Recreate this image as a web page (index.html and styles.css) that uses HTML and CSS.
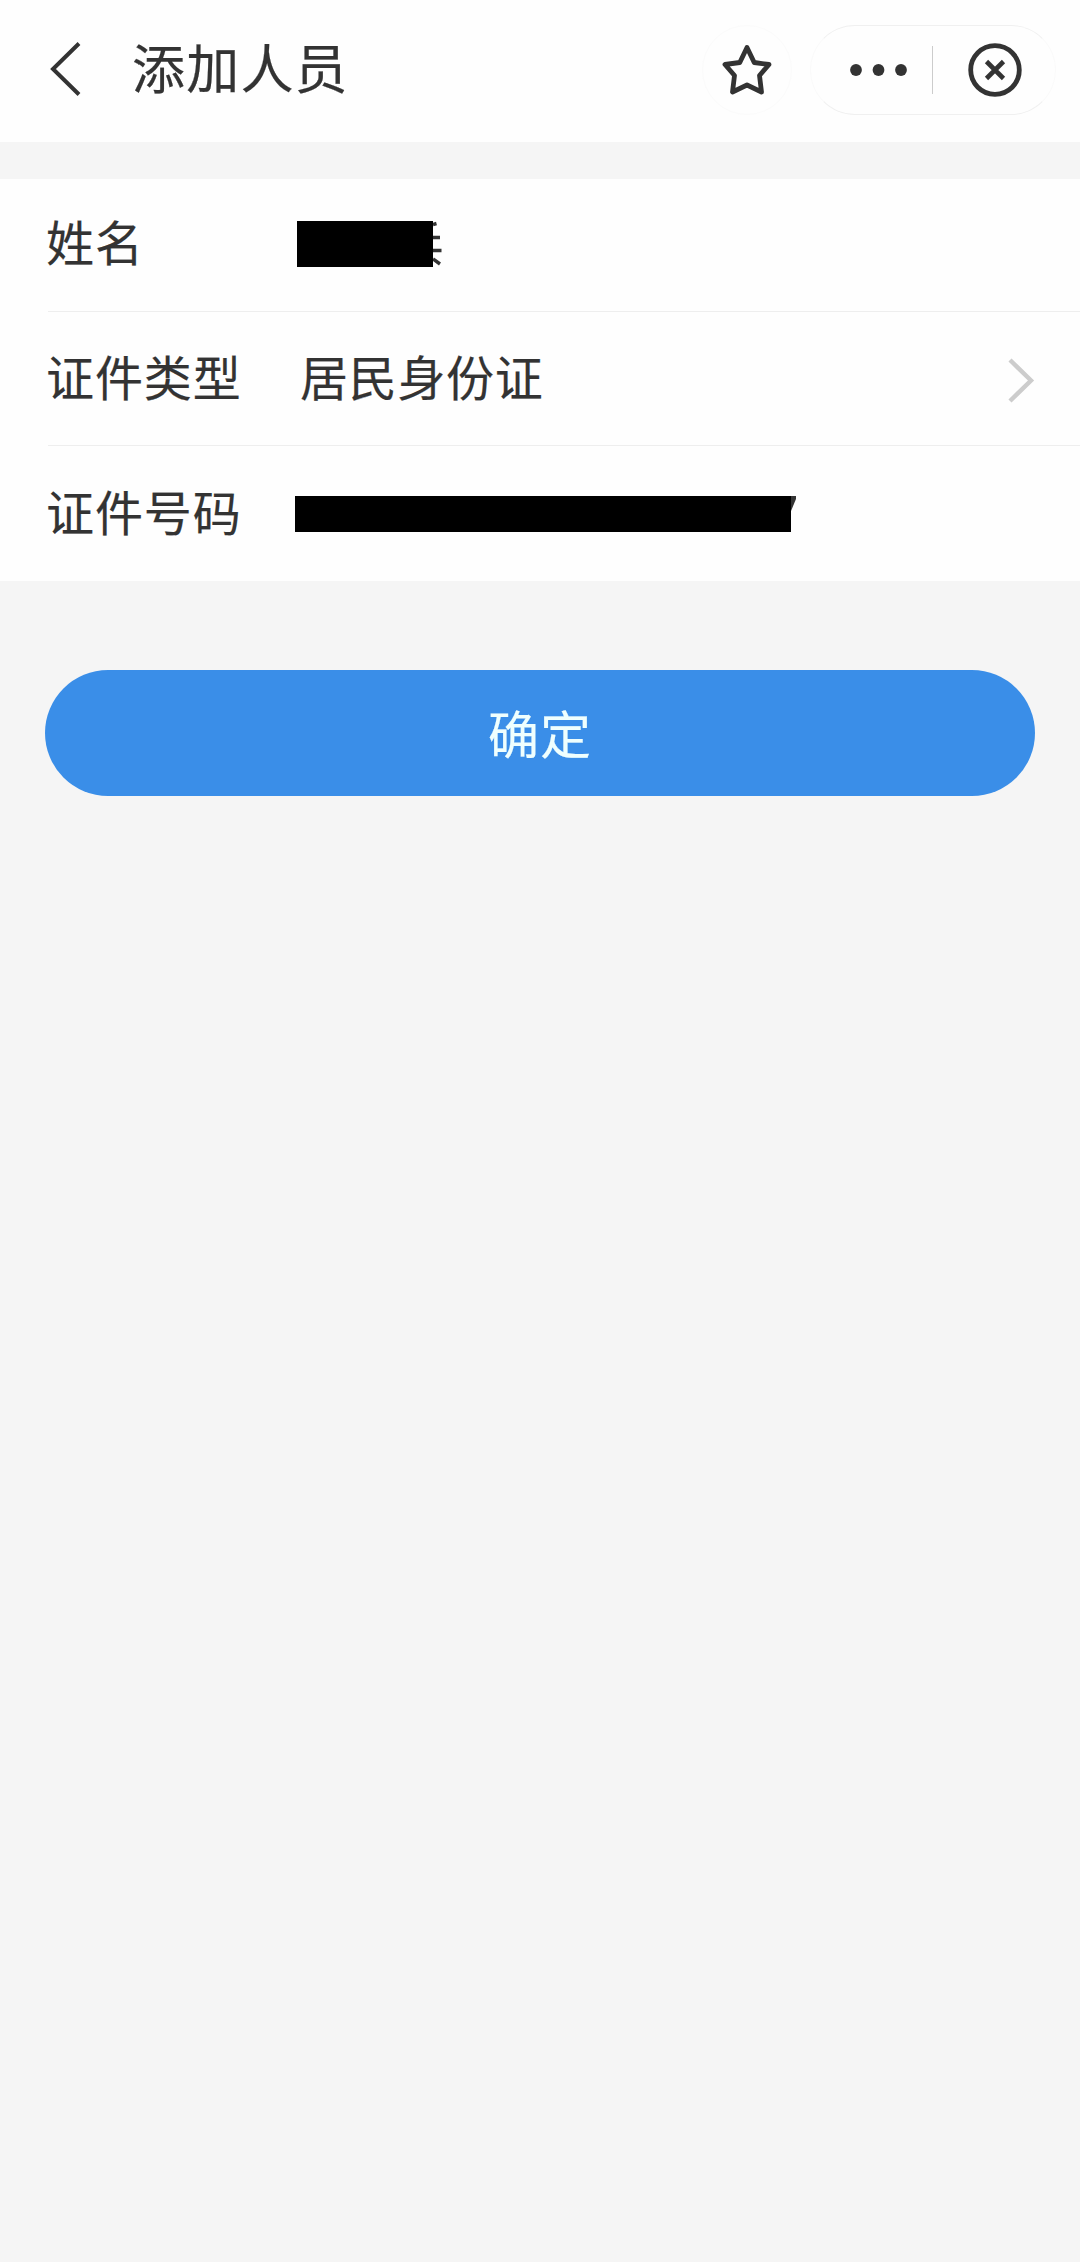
FILE: index.html
```html
<!DOCTYPE html>
<html lang="zh-CN">
<head>
    <meta charset="UTF-8">
    <meta name="viewport" content="width=device-width, initial-scale=1.0">
    <title>添加人员</title>
    <link rel="stylesheet" href="styles.css">
</head>

<body>
    <header class="navbar">
        <svg class="back" viewBox="0 0 34 56" width="34" height="56">
            <polyline points="32,1.5 6,27 32,52.5" fill="none" stroke="#333" stroke-width="4" />
        </svg>
        <h1>添加人员</h1>
        <div class="favorite">
            <svg viewBox="0 0 54 54" width="54" height="54">
                <path d="M27 4.5 L34.2 19.5 L49 21.5 L39.5 32.5 L41.5 49 L27 42 L12.5 49 L14.5 32.5 L5 21.5 L19.8 19.5 Z"
                    fill="none" stroke="#333" stroke-width="4.8" stroke-linejoin="round" />
            </svg>
        </div>
        <div class="capsule">
            <svg class="more" viewBox="0 0 58 14" width="58" height="14">
                <circle cx="6" cy="7" r="5.9" fill="#333" />
                <circle cx="28.5" cy="7" r="5.9" fill="#333" />
                <circle cx="51" cy="7" r="5.9" fill="#333" />
            </svg>
            <span class="divider"></span>
            <svg class="close" viewBox="0 0 54 54" width="54" height="54">
                <circle cx="27" cy="27" r="24.3" fill="none" stroke="#333" stroke-width="4.8" />
                <path d="M18.5 18.5 L35.5 35.5 M35.5 18.5 L18.5 35.5" stroke="#333" stroke-width="4.6" />
            </svg>
        </div>
    </header>

    <main>
        <div class="form">
            <div class="row row-name">
                <span class="label">姓名</span>
                <span class="mask mask-name"></span>
                <!-- bits of the value that stick out past the mask -->
                <svg class="mask-edge" viewBox="0 0 10 46" width="10" height="46">
                    <path d="M0 3.5 L3.5 2.5 M0 16.5 H7 M0 29.5 H8.5 M0 38 L7 43" fill="none" stroke="#333" stroke-width="3.4" />
                </svg>
            </div>
            <div class="row">
                <span class="label">证件类型</span>
                <span class="value">居民身份证</span>
                <svg class="arrow" viewBox="0 0 28 48" width="28" height="48">
                    <polyline points="3,5 24,25.5 3,46" fill="none" stroke="#ccc" stroke-width="4.4" />
                </svg>
            </div>
            <div class="row">
                <span class="label">证件号码</span>
                <span class="mask mask-number"></span>
                <svg class="mask-edge" viewBox="0 0 6 36" width="6" height="36">
                    <path d="M0 0 H5 V3 L0 15 Z" fill="#333" />
                </svg>
            </div>
        </div>

        <button class="submit">确定</button>
    </main>
</body>

</html>
```
FILE: styles.css
```css
* {
    box-sizing: border-box;
}

html, body {
    min-height: 100%;
    margin: 0;
}

body {
    background-color: #f5f5f5;
    color: #333;
    font-family: "Noto Sans CJK SC", sans-serif;
    -webkit-text-stroke: 0.2px currentColor;
}

.navbar {
    display: flex;
    align-items: center;
    height: 142px;
    padding: 0 24px 2px 47px;
    background-color: #fefefe;
}

.navbar h1 {
    margin: 0 auto 0 51px;
    padding-bottom: 9px;
    font-size: 53px;
    font-weight: 400;
    line-height: 80px;
    letter-spacing: 1.2px;
}

.favorite {
    display: flex;
    align-items: center;
    justify-content: center;
    width: 90px;
    height: 90px;
    margin-right: 18px;
    border: 1px solid #fbfbfb;
    border-radius: 50%;
}

.capsule {
    display: flex;
    align-items: center;
    width: 246px;
    height: 90px;
    padding-left: 39px;
    border: 1px solid #f0f0f0;
    border-color: #f0f0f0 #fafafa;
    border-radius: 45px;
}

.divider {
    width: 1px;
    height: 48px;
    margin: 0 35px 0 24px;
    background-color: #ccc;
}

.form {
    margin-top: 37px;
    background-color: #fefefe;
}

.row {
    display: flex;
    align-items: center;
    height: 134px;
    margin-left: 48px;
    padding-right: 45px;
    border-bottom: 1px solid #eee;
}

.row-name {
    height: 133px;
    padding-bottom: 3px;
}

.row:last-child {
    height: 135px;
    border-bottom: none;
}

.label {
    width: 254px;
    margin-left: -2px;
    padding-bottom: 7px;
    font-size: 48px;
    line-height: 72px;
    letter-spacing: 0.9px;
}

.value {
    padding-bottom: 7px;
    font-size: 48px;
    line-height: 72px;
    letter-spacing: 0.7px;
}

.arrow {
    margin-left: auto;
}

.mask {
    margin-left: -3px;
    background-color: #000;
}

.mask-name {
    width: 136px;
    height: 46px;
}

.mask-number {
    width: 496px;
    height: 36px;
    margin-left: -5px;
}

.submit {
    display: block;
    width: 990px;
    height: 126px;
    margin: 89px auto 0;
    padding: 0 0 3px;
    border: none;
    border-radius: 63px;
    background-color: #3a8ee8;
    color: #effffe;
    font-family: inherit;
    font-size: 51px;
    letter-spacing: 1px;
}
```
